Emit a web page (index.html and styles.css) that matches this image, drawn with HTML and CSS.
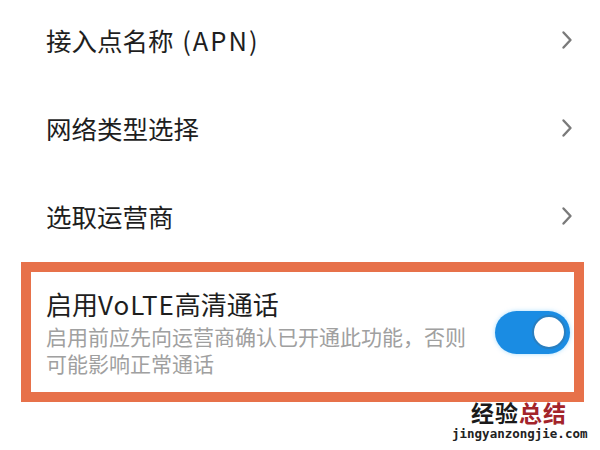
FILE: index.html
```html
<!DOCTYPE html>
<html lang="zh-CN">
<head>
<meta charset="utf-8">
<link rel="stylesheet" href="styles.css">
</head>
<body>
<div class="page">
  <div class="list">
    <div class="row"><span class="label">接入点名称 <span class="latin">(APN)</span></span>
      <svg class="chev" width="14" height="22" viewBox="0 0 14 22"><path d="M3.5 3.5 L10.5 11 L3.5 18.5" fill="none" stroke="#7a7a7a" stroke-width="2.4" stroke-linecap="round" stroke-linejoin="round"/></svg></div>
    <div class="row"><span class="label">网络类型选择</span>
      <svg class="chev" width="14" height="22" viewBox="0 0 14 22"><path d="M3.5 3.5 L10.5 11 L3.5 18.5" fill="none" stroke="#7a7a7a" stroke-width="2.4" stroke-linecap="round" stroke-linejoin="round"/></svg></div>
    <div class="row"><span class="label">选取运营商</span>
      <svg class="chev" width="14" height="22" viewBox="0 0 14 22"><path d="M3.5 3.5 L10.5 11 L3.5 18.5" fill="none" stroke="#7a7a7a" stroke-width="2.4" stroke-linecap="round" stroke-linejoin="round"/></svg></div>
  </div>
  <div class="box">
    <div class="text">
      <div class="title">启用<span class="latin-t">VoLTE</span>高清通话</div>
      <div class="sub">启用前应先向运营商确认已开通此功能，否则可能影响正常通话</div>
    </div>
    <div class="toggle"><div class="knob"></div></div>
  </div>
  <div class="mark">
    <div class="mark-cn"><span class="blk">经验</span><span class="red">总结</span></div>
    <div class="mark-en">jingyanzongjie.com</div>
  </div>
</div>
</body>
</html>
```
FILE: styles.css
```css
html, body {
  margin: 0;
  padding: 0;
  background: #fff;
}
body {
  font-family: "Noto Sans CJK SC", "Noto Sans", sans-serif;
  color: #1e1e1e;
}
.page {
  position: relative;
  width: 600px;
  height: 450px;
  overflow: hidden;
}
.list {
  margin-top: -4px;
  padding-left: 46px;
  padding-right: 26px;
}
.row {
  height: 88px;
  display: flex;
  align-items: center;
  justify-content: space-between;
}
.label {
  font-size: 25.5px;
  line-height: 30px;
}
.latin {
  letter-spacing: 2px;
  margin-left: 3px;
}
.latin-t {
  letter-spacing: 1px;
}
.box {
  margin: 2px 0 0 21px;
  height: 120px;
  border: 10px solid #e7714a;
  display: flex;
  align-items: center;
  justify-content: space-between;
  padding: 0 4px 0 15px;
  box-sizing: content-box;
  width: 524px;
}
.text {
  width: 440px;
}
.title {
  font-size: 26px;
  line-height: 29px;
  margin-top: 2px;
}
.sub {
  font-size: 21px;
  line-height: 27px;
  color: #a0a0a0;
  margin-top: 5px;
  width: 440px;
}
.toggle {
  width: 75px;
  height: 43px;
  border-radius: 22px;
  background: #1a8ce3;
  display: flex;
  align-items: center;
  justify-content: flex-end;
  padding-right: 4px;
  box-sizing: border-box;
  box-shadow: 0 0 4px rgba(80, 190, 255, 0.5);
}
.knob {
  width: 34px;
  height: 34px;
  border-radius: 50%;
  background: #fff;
  border: 2px solid #2a7fc0;
  box-sizing: border-box;
}
.mark {
  position: absolute;
  left: 452px;
  top: 398px;
  width: 134px;
  text-align: center;
}
.mark-cn {
  font-size: 23px;
  line-height: 28px;
  font-weight: 700;
  letter-spacing: 1px;
}
.blk { color: #1a1a1a; }
.red { color: #a3242a; }
.mark-en {
  font-family: "DejaVu Sans Mono", monospace;
  font-size: 12.5px;
  line-height: 16px;
  color: #222;
  font-weight: 700;
}
```
